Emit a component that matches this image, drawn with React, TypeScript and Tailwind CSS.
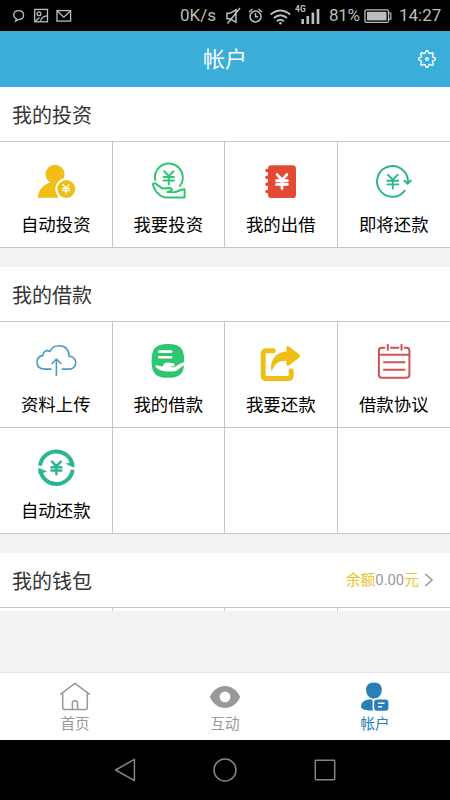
import type { ReactNode } from "react";

type Item = { label: string; icon: ReactNode };

const line = { fill: "none", strokeLinecap: "round", strokeLinejoin: "round" } as const;

// yuan sign centred on x, y; s is half of its height
function Yuan({ x, y, s, w, color }: { x: number; y: number; s: number; w: number; color: string }) {
  const h = s * 0.7;
  return (
    <path
      {...line}
      stroke={color}
      strokeWidth={w}
      d={`M${x - h} ${y - s}L${x} ${y - s * 0.25}L${x + h} ${y - s}M${x} ${y - s * 0.25}V${y + s}M${x - s * 0.78} ${y - s * 0.12}H${x + s * 0.78}M${x - s * 0.78} ${y + s * 0.4}H${x + s * 0.78}`}
    />
  );
}

function Icon({ children }: { children: ReactNode }) {
  return (
    <svg viewBox="0 0 44 44" className="h-11 w-11 shrink-0">
      {children}
    </svg>
  );
}

const investItems: Item[] = [
  {
    label: "自动投资",
    icon: (
      <Icon>
        <circle cx="21" cy="14.3" r="9.5" fill="#f0be14" />
        <path d="M3.7 37.8C4.2 30 9 25.3 15.5 22.5H27L24 37.8Z" fill="#f0be14" />
        <circle cx="32.3" cy="29" r="11" fill="#fff" />
        <circle cx="32.3" cy="29" r="9" fill="#f0be14" />
        <Yuan x={32} y={29} s={4.3} w={1.3} color="#fff" />
      </Icon>
    ),
  },
  {
    label: "我要投资",
    icon: (
      <Icon>
        <path {...line} stroke="#2fc671" strokeWidth="2" d="M9.2 20A13.9 13.9 0 1 1 33.8 26" />
        <Yuan x={22.8} y={17.8} s={6.6} w={2} color="#2fc671" />
        <path
          {...line}
          stroke="#2fc671"
          strokeWidth="2"
          d="M6.8 24.2C7.4 22.8 9.2 23 10.4 24.1L16.2 28.4L24 28C26.3 28 26.5 30.3 24.6 30.9L21.5 32L28 32.2C31.5 32 33.2 29.6 38.6 29.3V37.5H18.5C13.5 35.8 8.5 31 6.8 24.2Z"
        />
      </Icon>
    ),
  },
  {
    label: "我的出借",
    icon: (
      <Icon>
        <rect x="9" y="5.3" width="28" height="32.8" rx="3.4" fill="#e24a36" />
        <path
          d="M8 10.5H11M8 17.3H11M8 24.3H11M8 31.5H11"
          stroke="#e24a36"
          strokeWidth="3.6"
          strokeLinecap="round"
        />
        <Yuan x={23} y={21.6} s={7} w={2.8} color="#fff" />
      </Icon>
    ),
  },
  {
    label: "即将还款",
    icon: (
      <Icon>
        <path {...line} stroke="#2bb594" strokeWidth="2" d="M32.6 30.8A15.4 15.4 0 1 1 35.8 22.5" />
        <path {...line} stroke="#2bb594" strokeWidth="2" d="M32.4 20.7L35.6 23.7L38.7 20.5" />
        <Yuan x={20.8} y={21.6} s={7} w={1.8} color="#2bb594" />
      </Icon>
    ),
  },
];

const loanItems: Item[] = [
  {
    label: "资料上传",
    icon: (
      <Icon>
        <path
          {...line}
          stroke="#4b9ac5"
          strokeWidth="1.6"
          d="M17 29.1H10.5C5.8 28.8 3.1 26 3.1 22.4C3.1 18.6 5.6 15.9 9 15.4C9 11.5 12.5 9.5 16 11.5C17.5 7.8 21 5.8 25.3 5.8C31.5 5.8 35.4 10.4 35 16.3C39 16.5 41.7 19 41.7 22.7C41.7 26.5 39 29.1 34.6 29.1H28.3"
        />
        <path {...line} stroke="#4b9ac5" strokeWidth="1.6" d="M22.4 35.5V19.2M18 23.5L22.4 19L26.8 23.5" />
      </Icon>
    ),
  },
  {
    label: "我的借款",
    icon: (
      <Icon>
        <path
          d="M22 4C33.5 4 38.2 7.8 38.2 20.9C38.2 34 33.5 37.8 22 37.8C10.5 37.8 5.6 34 5.6 20.9C5.6 7.8 10.5 4 22 4Z"
          fill="#2fc671"
        />
        <path d="M13.2 11.6H25.2M13.2 17.2H25.2" stroke="#fff" strokeWidth="2.6" strokeLinecap="round" />
        <path
          d="M9.2 26.2C9.6 24.8 11.3 25.2 12.6 25.7L16.5 26.4C17.6 23.6 19.2 22.5 22 22.5L27 23.2C29.4 23.8 29.2 26 27 26.3L22.8 27L27.5 27.2C30.8 26.6 33.2 23 39 22V25.2C34.5 26 32.8 31 27.5 31.4C20 32 12.5 31.2 9.2 26.2Z"
          fill="#fff"
        />
      </Icon>
    ),
  },
  {
    label: "我要还款",
    icon: (
      <Icon>
        <path
          {...line}
          stroke="#efbf18"
          strokeWidth="5"
          d="M14.2 10.8H7.5Q4.2 10.8 4.2 14.2V35.2Q4.2 38.6 7.5 38.6H29Q32.2 38.6 32.2 35.2V30.8"
        />
        <path
          d="M12 30C11 20 17 12.3 27.4 11.5V7.4Q27.8 5 30 6.4L40.4 14.4Q42 16 40.4 17.5L30 25.6Q27.8 26.7 27.4 24.4V20.8C21 20 16.5 22.6 13.3 30Q12.5 31.2 12 30Z"
          fill="#efbf18"
        />
      </Icon>
    ),
  },
  {
    label: "借款协议",
    icon: (
      <Icon>
        <path
          {...line}
          stroke="#d05353"
          strokeWidth="2"
          d="M12.3 7.8H9.8Q6.9 7.8 6.9 10.7V34.8Q6.9 37.7 9.8 37.7H34.5Q37.4 37.7 37.4 34.8V10.7Q37.4 7.8 34.5 7.8H32.5M19 7.8H26.5M15.8 4.8V9.8M29.5 4.8V9.8M7 14.8H37.2M12 22.2H32.5M12 29.8H32.5"
        />
      </Icon>
    ),
  },
  {
    label: "自动还款",
    icon: (
      <Icon>
        <path
          fill="none"
          stroke="#2bb594"
          strokeWidth="4"
          d="M6 19.6A16.5 16.5 0 0 1 38.3 17.8M38.7 23.8A16.5 16.5 0 0 1 6.4 25.6"
        />
        <path d="M31.5 17.8L36 16.5L40.2 16.5L40.5 20.8L39 21.2ZM13.2 25.6L8.7 26.9L4.5 26.9L4.2 22.6L5.7 22.2Z" fill="#2bb594" />
        <Yuan x={22.4} y={21.9} s={6.3} w={2.5} color="#2bb594" />
      </Icon>
    ),
  },
];

function StatusBar() {
  return (
    <div className="flex h-[31px] items-center bg-black pl-3 text-[17px] text-[#bdbdbd]">
      <svg viewBox="0 0 62 18" className="mr-auto h-[18px] w-[62px]" fill="none" stroke="#bdbdbd" strokeWidth="1.3">
        <path d="M4.4 11.8C.2 9.7 1 3.6 6.5 3.6C13.2 3.6 13.2 12.2 6.8 12.5L3.5 14.2Z" />
        <rect x="22.7" y="2.4" width="12.8" height="12.4" />
        <circle cx="27" cy="6.7" r="1.9" />
        <path d="M23 14.5L27.5 10.5M28.5 14.5C29 11.5 31.5 9 35.2 8.8" />
        <rect x="45" y="3.6" width="13.6" height="10.5" />
        <path d="M45.2 4L51.8 10.2L58.4 4" />
      </svg>
      <span className="mr-[7px] w-[38px] whitespace-nowrap">0K/s</span>
      <svg viewBox="0 0 104 24" className="h-6 w-[104px]" fill="none" stroke="#bdbdbd" strokeWidth="1.5">
        <path d="M2 9.3H5L11 5.8V18.3L5 14.8H2ZM15 4L2.5 19.5" />
        <circle cx="30.5" cy="12.5" r="5.5" />
        <path d="M30.5 9V12.7H33.2M24 8L27.5 5M33.5 5L37 8" />
        <path d="M45.6 10.5Q55.4 2.5 65.2 10.5M48.8 14Q55.4 8.4 62 14M52 17.3Q55.4 14.2 58.8 17.3" strokeWidth="2" />
        <circle cx="55.4" cy="19.2" r="1.3" fill="#bdbdbd" stroke="none" />
        <text x="70" y="8.3" fill="#bdbdbd" stroke="none" fontSize="8.5" fontWeight="700">
          4G
        </text>
        <path d="M77.7 20V15M82.8 20V12M87.9 20V8.5M93 20V5" strokeWidth="2.7" />
      </svg>
      <span className="w-[35px] text-[17px] tracking-[-0.3px] whitespace-nowrap">81%</span>
      <svg viewBox="0 0 28 16" className="h-4 w-7">
        <rect x="1" y="1.8" width="23.5" height="12.6" rx="1.5" fill="none" stroke="#bdbdbd" strokeWidth="1.3" />
        <rect x="3" y="3.8" width="19.5" height="8.6" fill="#bdbdbd" />
        <path d="M25 5H26.8V11.2H25" fill="none" stroke="#bdbdbd" strokeWidth="1.2" />
      </svg>
      <span className="mr-2 ml-[7px] w-[43px] whitespace-nowrap">14:27</span>
    </div>
  );
}

// outline of the eight-toothed settings gear
const gear = Array.from({ length: 32 }, (_, i) => {
  const r = i % 4 < 2 ? 8.3 : 6.2;
  const a = ((i - 0.5) * Math.PI) / 16 - Math.PI / 2;
  return `${(10 + r * Math.cos(a)).toFixed(2)},${(10 + r * Math.sin(a)).toFixed(2)}`;
}).join(" ");

function TitleBar() {
  return (
    <header className="grid h-14 grid-cols-3 items-center bg-[#3aadd9] text-white">
      <h1 className="col-start-2 pt-px text-center text-[22px] leading-none">帐户</h1>
      <svg viewBox="0 0 20 20" className="mr-[13px] h-5 w-5 justify-self-end" fill="none" stroke="#fff">
        <polygon points={gear} strokeWidth="1.4" strokeLinejoin="round" />
        <circle cx="10" cy="10" r="1.4" strokeWidth="1.2" />
      </svg>
    </header>
  );
}

function SectionHead({ title, children }: { title: string; children?: ReactNode }) {
  return (
    <div className="flex h-[55px] items-center justify-between border-b border-[#c6c6c6] bg-white pr-4 pl-3">
      <h2 className="pt-[3px] text-[20px] leading-none text-[#333]">{title}</h2>
      {children}
    </div>
  );
}

function ItemGrid({ items }: { items: Item[] }) {
  const blanks = (4 - (items.length % 4)) % 4;
  const cells: (Item | null)[] = [...items, ...Array(blanks).fill(null)];
  return (
    <div className="grid grid-cols-4 bg-white">
      {cells.map((item, idx) => (
        <div
          key={idx}
          className="flex h-[106px] flex-col items-center border-r border-b border-[#c6c6c6] pt-[18px] nth-[4n]:border-r-0"
        >
          {item?.icon}
          {item && <span className="mt-[11px] text-[17.4px] leading-5 text-black">{item.label}</span>}
        </div>
      ))}
    </div>
  );
}

function TabBar() {
  return (
    <div className="grid h-[68px] grid-cols-3 border-t border-[#e6e6e6] bg-white text-[14.6px] text-[#999]">
      <div className="flex flex-col items-center pt-[8px]">
        <svg viewBox="0 0 32 32" className="h-8 w-8" {...line} stroke="#999" strokeWidth="1.5">
          <path d="M1.7 13.2L16 2.3L30.3 13.2M3.7 12.5V26.4Q3.7 28.4 5.7 28.4H26.3Q28.3 28.4 28.3 26.4V12.5M13.4 28V22Q13.4 19.7 16 19.7Q18.6 19.7 18.6 22V28" />
        </svg>
        <span className="mt-[1px] leading-5">首页</span>
      </div>
      <div className="flex flex-col items-center pt-[8px]">
        <svg viewBox="0 0 32 32" className="h-8 w-8">
          <path d="M.8 15.9C7.5 1.2 24.5 1.2 31.2 15.9C24.5 30.6 7.5 30.6 .8 15.9Z" fill="#999" />
          <circle cx="16" cy="15.9" r="5.4" fill="#fff" />
        </svg>
        <span className="mt-[1px] leading-5">互动</span>
      </div>
      <div className="flex flex-col items-center pt-[8px] text-[#2980b9]">
        <svg viewBox="0 0 32 32" className="h-8 w-8" fill="#2980b9">
          <path d="M15 1.4C20.5 1.4 23 4.4 22.8 9C22.6 14 19.4 17.7 15 17.7C10.6 17.7 7.3 14 7.1 9C6.9 4.4 9.5 1.4 15 1.4Z" />
          <path d="M2 25.5C2 21.5 5.5 18.5 11.8 18.3L14 20V29.6C7 29.6 2 28.5 2 25.5Z" />
          <rect x="13.6" y="17.2" width="17" height="14" rx="4" fill="#fff" />
          <rect x="15.2" y="18.6" width="14.2" height="11.2" rx="2.8" />
          <path d="M19 22.2H25.5M19 25.7H23.2" stroke="#fff" strokeWidth="1.5" />
        </svg>
        <span className="mt-[1px] leading-5">帐户</span>
      </div>
    </div>
  );
}

function NavBar() {
  return (
    <div className="flex h-[60px] items-center justify-center gap-[76px] bg-black">
      <svg viewBox="0 0 24 24" className="h-6 w-6" {...line} stroke="#858585" strokeWidth="1.5">
        <path d="M21.4 1.4V22.6L2.6 12Z" />
      </svg>
      <svg viewBox="0 0 24 24" className="h-6 w-6" {...line} stroke="#858585" strokeWidth="1.5">
        <circle cx="12" cy="12" r="11" />
      </svg>
      <svg viewBox="0 0 24 24" className="h-6 w-6" {...line} stroke="#858585" strokeWidth="1.5">
        <rect x="2.3" y="2.3" width="19.4" height="19.4" rx="0.6" />
      </svg>
    </div>
  );
}

export default function App() {
  return (
    <div className="flex h-[800px] w-[450px] flex-col overflow-hidden bg-[#f2f2f2] font-[Roboto,'Noto_Sans_CJK_SC',sans-serif]">
      <StatusBar />
      <TitleBar />

      <main className="flex flex-1 flex-col gap-[19px]">
        <section>
          <SectionHead title="我的投资" />
          <ItemGrid items={investItems} />
        </section>

        <section>
          <SectionHead title="我的借款" />
          <ItemGrid items={loanItems} />
        </section>

        <section>
          <SectionHead title="我的钱包">
            <div className="flex items-center text-[14.8px] leading-none text-[#999]">
              <span className="text-[#e8c52d]">余额</span>
              <span>0.00</span>
              <span className="text-[#e8c52d]">元</span>
              <svg viewBox="0 0 10 16" className="ml-[5px] h-4 w-[10px]" fill="none" stroke="#999" strokeWidth="1.6">
                <path d="M1.5 2L8 8L1.5 14" />
              </svg>
            </div>
          </SectionHead>
          <div className="grid h-[3px] grid-cols-4 bg-white">
            <div className="border-r border-[#c6c6c6]" />
            <div className="border-r border-[#c6c6c6]" />
            <div className="border-r border-[#c6c6c6]" />
          </div>
        </section>
      </main>

      <TabBar />
      <NavBar />
    </div>
  );
}
